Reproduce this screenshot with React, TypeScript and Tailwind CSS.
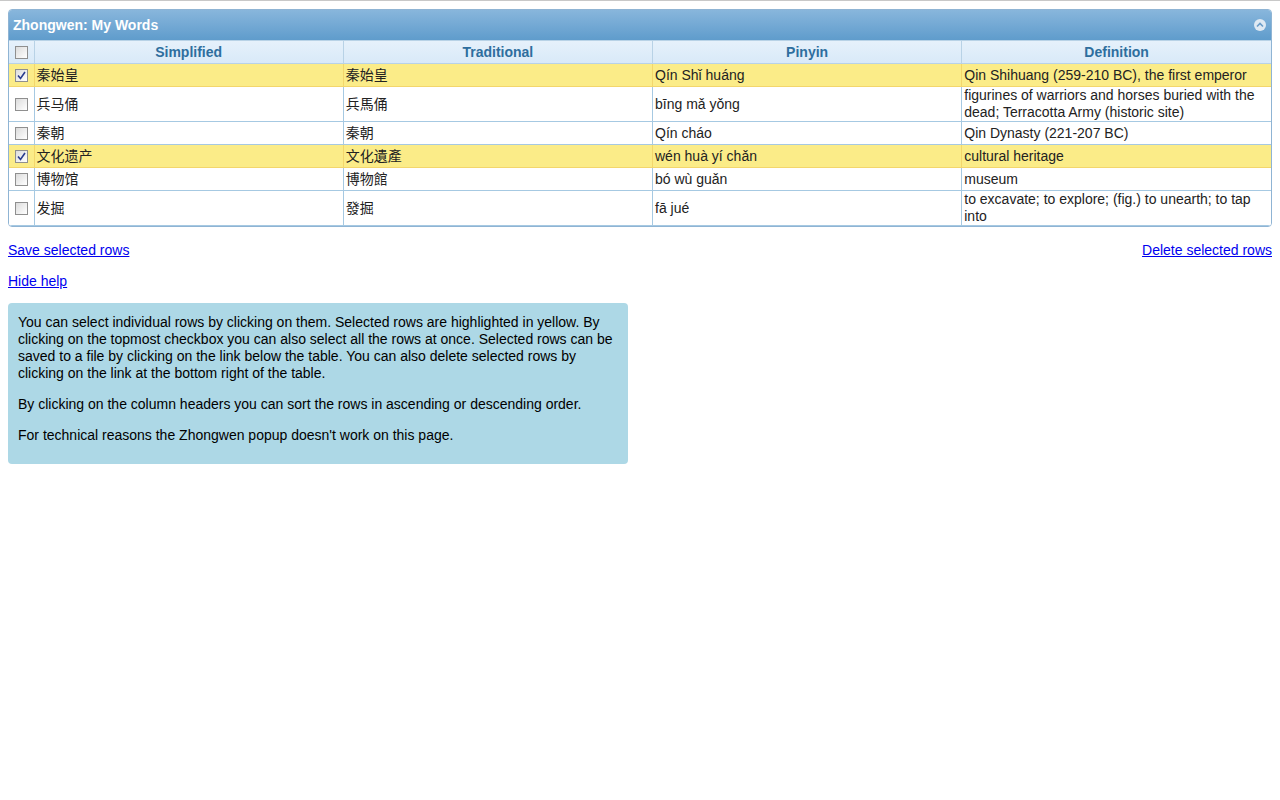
import React from 'react';

const rows = [
  { s: '秦始皇', t: '秦始皇', p: 'Qín Shǐ huáng', d: 'Qin Shihuang (259-210 BC), the first emperor', on: true },
  { s: '兵马俑', t: '兵馬俑', p: 'bīng mǎ yǒng', d: 'figurines of warriors and horses buried with the dead; Terracotta Army (historic site)', on: false },
  { s: '秦朝', t: '秦朝', p: 'Qín cháo', d: 'Qin Dynasty (221-207 BC)', on: false },
  { s: '文化遗产', t: '文化遺產', p: 'wén huà yí chǎn', d: 'cultural heritage', on: true },
  { s: '博物馆', t: '博物館', p: 'bó wù guǎn', d: 'museum', on: false },
  { s: '发掘', t: '發掘', p: 'fā jué', d: 'to excavate; to explore; (fig.) to unearth; to tap into', on: false },
];

function Box({ on }: { on: boolean }) {
  return (
    <div className="w-[13px] h-[13px] border border-[#8f8f8f] bg-gradient-to-br from-[#dcdcdc] to-white flex items-center justify-center">
      {on && (
        <svg width="9" height="9" viewBox="0 0 9 9">
          <path d="M1 4.5 L3.5 7.5 L8 1" fill="none" stroke="#2a3c8e" strokeWidth="1.6" />
        </svg>
      )}
    </div>
  );
}

export default function App() {
  const font = { fontFamily: '"Liberation Sans", Arial, "Noto Sans CJK SC", sans-serif' };
  return (
    <div className="bg-white min-h-[800px] border-t border-[#c8c8c8] text-[14px] text-[#222]" style={font}>
      <div className="pt-2 px-2">
        <div className="border border-[#8fb4d4] rounded-[4px] overflow-hidden">
          <div className="h-[30px] bg-gradient-to-b from-[#88b6dc] to-[#5f9ccc] flex items-center justify-between px-1 text-white font-bold text-[14px]">
            <span>Zhongwen: My Words</span>
            <span className="w-[12px] h-[12px] rounded-full bg-[#dfe9f3] flex items-center justify-center mr-[1px]">
              <svg width="8" height="6" viewBox="0 0 8 6"><path d="M1 4.5 L4 1.5 L7 4.5" fill="none" stroke="#6a9cc8" strokeWidth="1.6" /></svg>
            </span>
          </div>
          <table className="w-full border-collapse table-fixed">
            <colgroup>
              <col className="w-[25px]" />
              <col /><col /><col /><col />
            </colgroup>
            <thead>
              <tr className="h-[23px] bg-gradient-to-b from-[#e6f1fb] to-[#d8e9f8] text-[#2e6e9e] font-bold">
                <th className="border border-[#b8d2e6] border-l-0"><div className="flex justify-center"><Box on={false} /></div></th>
                {['Simplified', 'Traditional', 'Pinyin', 'Definition'].map(h => (
                  <th key={h} className="border border-[#b8d2e6] last:border-r-0 font-bold">{h}</th>
                ))}
              </tr>
            </thead>
            <tbody>
              {rows.map((r, i) => (
                <tr key={i} className={r.on ? 'bg-[#fbec88]' : 'bg-white'}>
                  <td className={`border-b border-r ${r.on ? 'border-[#f3d66c]' : 'border-[#a6c9e2]'} ${r.d.length > 50 ? 'h-[35px]' : 'h-[23px]'}`}>
                    <div className="flex justify-center"><Box on={r.on} /></div>
                  </td>
                  {[r.s, r.t, r.p, r.d].map((c, j) => (
                    <td key={j} className={`border-b border-r last:border-r-0 px-[2px] leading-[17px] ${r.on ? 'border-[#f3d66c]' : 'border-[#a6c9e2]'}`}>{c}</td>
                  ))}
                </tr>
              ))}
            </tbody>
          </table>
        </div>
        <div className="flex justify-between mt-[13px] leading-[20px]">
          <a href="#" className="text-[#0000ee] underline">Save selected rows</a>
          <a href="#" className="text-[#0000ee] underline">Delete selected rows</a>
        </div>
        <div className="mt-[11px] leading-[20px]">
          <a href="#" className="text-[#0000ee] underline">Hide help</a>
        </div>
        <div className="mt-[12px] w-[620px] bg-[#add8e6] rounded-[4px] px-[10px] pt-[11px] pb-[20px] text-[14px] leading-[17px] text-black">
          <p>You can select individual rows by clicking on them. Selected rows are highlighted in yellow. By clicking on the topmost checkbox you can also select all the rows at once. Selected rows can be saved to a file by clicking on the link below the table. You can also delete selected rows by clicking on the link at the bottom right of the table.</p>
          <p className="mt-[14px]">By clicking on the column headers you can sort the rows in ascending or descending order.</p>
          <p className="mt-[14px]">For technical reasons the Zhongwen popup doesn't work on this page.</p>
        </div>
      </div>
    </div>
  );
}
